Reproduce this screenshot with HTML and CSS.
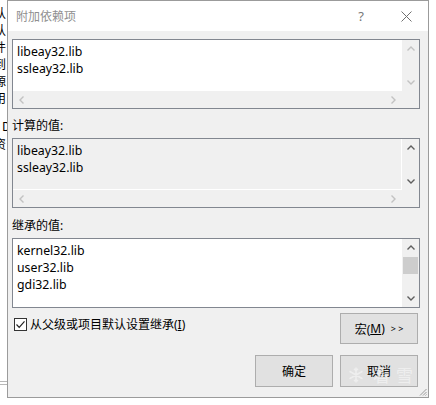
FILE: index.html
```html
<!DOCTYPE html>
<html lang="zh-CN">
<head>
    <meta charset="UTF-8">
    <meta name="viewport" content="width=device-width, initial-scale=1.0">
    <title>附加依赖项</title>
    <link rel="stylesheet" href="styles.css">
</head>
<body>
    <div class="screen">
        <div class="edge-left">
            <div class="edge-chars">
                <span>认</span>
                <span>认</span>
                <span>件</span>
                <span>到</span>
                <span>源</span>
                <span>用</span>
            </div>
            <div class="edge-chars lower">
                <span class="latin">D</span>
                <span>资</span>
            </div>
            <div class="edge-rule"></div>
            <div class="edge-rule close-rule"></div>
        </div>

        <div class="dialog">
            <div class="titlebar">
                <span class="title">附加依赖项</span>
                <span class="help">?</span>
                <span class="close">
                    <svg width="11" height="11" viewBox="0 0 11 11"><path d="M0.5 0.5 L10.5 10.5 M10.5 0.5 L0.5 10.5" stroke="#707070" stroke-width="1" fill="none"/></svg>
                </span>
            </div>

            <div class="content">
                <div class="listbox">
                    <div class="list-items">
                        <div>libeay32.lib</div>
                        <div>ssleay32.lib</div>
                    </div>
                    <div class="vscroll">
                        <span class="arrow"><svg width="8" height="5" viewBox="0 0 8 5"><path d="M0.5 4.5 L4 1 L7.5 4.5" fill="none" stroke="currentColor" stroke-width="1.4"/></svg></span>
                        <span class="arrow down"><svg width="8" height="5" viewBox="0 0 8 5"><path d="M0.5 0.5 L4 4 L7.5 0.5" fill="none" stroke="currentColor" stroke-width="1.4"/></svg></span>
                    </div>
                    <div class="hscroll">
                        <span class="arrow"><svg width="5" height="8" viewBox="0 0 5 8"><path d="M4.5 0.5 L1 4 L4.5 7.5" fill="none" stroke="currentColor" stroke-width="1.4"/></svg></span>
                        <span class="arrow"><svg width="5" height="8" viewBox="0 0 5 8"><path d="M0.5 0.5 L4 4 L0.5 7.5" fill="none" stroke="currentColor" stroke-width="1.4"/></svg></span>
                    </div>
                    <div class="corner"></div>
                </div>

                <div class="field-label">计算的值:</div>
                <div class="listbox readonly">
                    <div class="list-items">
                        <div>libeay32.lib</div>
                        <div>ssleay32.lib</div>
                    </div>
                    <div class="vscroll">
                        <span class="arrow on"><svg width="8" height="5" viewBox="0 0 8 5"><path d="M0.5 4.5 L4 1 L7.5 4.5" fill="none" stroke="currentColor" stroke-width="1.4"/></svg></span>
                        <span class="arrow on down"><svg width="8" height="5" viewBox="0 0 8 5"><path d="M0.5 0.5 L4 4 L7.5 0.5" fill="none" stroke="currentColor" stroke-width="1.4"/></svg></span>
                    </div>
                    <div class="hscroll">
                        <span class="arrow"><svg width="5" height="8" viewBox="0 0 5 8"><path d="M4.5 0.5 L1 4 L4.5 7.5" fill="none" stroke="currentColor" stroke-width="1.4"/></svg></span>
                        <span class="arrow"><svg width="5" height="8" viewBox="0 0 5 8"><path d="M0.5 0.5 L4 4 L0.5 7.5" fill="none" stroke="currentColor" stroke-width="1.4"/></svg></span>
                    </div>
                    <div class="corner"></div>
                </div>

                <div class="field-label spaced">继承的值:</div>
                <div class="listbox no-h">
                    <div class="list-items">
                        <div>kernel32.lib</div>
                        <div>user32.lib</div>
                        <div>gdi32.lib</div>
                    </div>
                    <div class="vscroll">
                        <span class="arrow on"><svg width="8" height="5" viewBox="0 0 8 5"><path d="M0.5 4.5 L4 1 L7.5 4.5" fill="none" stroke="currentColor" stroke-width="1.4"/></svg></span>
                        <span class="thumb"></span>
                        <span class="arrow on down"><svg width="8" height="5" viewBox="0 0 8 5"><path d="M0.5 0.5 L4 4 L7.5 0.5" fill="none" stroke="currentColor" stroke-width="1.4"/></svg></span>
                    </div>
                </div>

                <div class="options-row">
                    <label class="check">
                        <span class="box"><svg width="11" height="11" viewBox="0 0 11 11"><path d="M1.5 5.5 L4.2 8.3 L9.5 2.3" fill="none" stroke="#222" stroke-width="1.2"/></svg></span>
                        <span>从父级或项目默认设置继承(<u>I</u>)</span>
                    </label>
                    <button class="btn" type="button">宏(<u>M</u>)<span class="more">&gt; &gt;</span></button>
                </div>

                <div class="actions">
                    <button class="btn tall" type="button">确定</button>
                    <button class="btn tall" type="button">取消</button>
                </div>
            </div>

            <div class="watermark">
                <svg width="16" height="16" viewBox="0 0 16 16"><path d="M8 0.5 V15.5 M1.5 4.2 L14.5 11.8 M1.5 11.8 L14.5 4.2 M6 1.8 L8 3.5 L10 1.8 M6 14.2 L8 12.5 L10 14.2" fill="none" stroke="#fff" stroke-width="1.6"/></svg>
                <span>看雪</span>
            </div>
            <svg class="grip" width="8" height="8" viewBox="0 0 8 8"><path d="M7.5 1 L1 7.5 M7.5 4 L4 7.5 M7.5 6.5 L6.5 7.5" stroke="#9a9a9a" stroke-width="1" fill="none"/></svg>
        </div>

        <div class="edge-right"></div>
    </div>
</body>
</html>
```

FILE: styles.css
```css
* {
    box-sizing: border-box;
}
body {
    margin: 0;
    background: #fff;
    font-family: "Noto Sans", "Noto Sans CJK SC", sans-serif;
    font-size: 12px;
    color: #000;
}
.screen {
    display: flex;
    width: 436px;
    height: 405px;
    overflow: hidden;
}

/* what is left of the window behind the dialog */
.edge-left {
    width: 7px;
    flex: none;
    overflow: hidden;
    display: flex;
    flex-direction: column;
}
.edge-chars {
    margin-left: -6px;
    padding-top: 4px;
    font-family: "Noto Sans CJK SC", sans-serif;
    font-size: 12px;
    line-height: 17px;
    white-space: nowrap;
}
.edge-chars span {
    display: block;
    height: 17px;
}
.edge-chars.lower {
    padding-top: 11px;
}
.edge-chars.lower span {
    height: 18px;
    line-height: 18px;
}
.edge-chars .latin {
    padding-left: 8px;
}
.edge-rule {
    margin-top: 228px;
    border-top: 1px solid #b8b8b8;
}
.edge-rule.close-rule {
    margin-top: 2px;
}
.edge-right {
    flex: 1;
}

.dialog {
    position: relative;
    width: 422px;
    height: 398px;
    flex: none;
    border: 1px solid #9b9b9b;
    background: #f0f0f0;
}
.titlebar {
    height: 30px;
    display: flex;
    align-items: center;
    padding-left: 8px;
    padding-right: 7px;
    background: #fff;
}
.title {
    color: #8f8f8f;
}
.help {
    margin-left: auto;
    width: 20px;
    text-align: center;
    color: #777;
    font-size: 13px;
}
.close {
    width: 30px;
    margin-left: 20px;
    display: flex;
    justify-content: center;
}

.content {
    padding: 8px 8px 0 4px;
}
.listbox {
    height: 70px;
    border: 1px solid #828790;
    background: #fff;
    display: grid;
    grid-template-columns: 1fr 17px;
    grid-template-rows: 1fr 17px;
}
.listbox.no-h {
    grid-template-rows: 1fr;
}
.listbox.readonly {
    background: #f0f0f0;
}
.listbox.readonly .list-items {
    border-right: 1px solid #fff;
    border-bottom: 1px solid #fff;
}
.list-items {
    padding: 3px 4px;
    font-size: 12.3px;
    line-height: 17px;
    overflow: hidden;
}
.vscroll {
    display: flex;
    flex-direction: column;
    background: #f0f0f0;
}
.hscroll {
    display: flex;
    justify-content: space-between;
    background: #f0f0f0;
}
.corner {
    background: #f0f0f0;
}
.arrow {
    width: 17px;
    height: 17px;
    display: flex;
    align-items: center;
    justify-content: center;
    color: #c2c2c2;
}
.arrow.on {
    color: #5f5f5f;
}
.arrow.down {
    margin-top: auto;
}
.thumb {
    height: 17px;
    margin: 1px 1px 0;
    background: #cdcdcd;
}

.field-label {
    margin: 8px 0 4px;
    line-height: 17px;
}
.field-label.spaced {
    margin-top: 9px;
}

.options-row {
    display: flex;
    justify-content: space-between;
    align-items: flex-start;
    margin-top: 5px;
    padding-right: 2px;
}
.check {
    display: flex;
    align-items: center;
    gap: 3px;
    margin-top: 3px;
    padding-left: 2px;
    line-height: 17px;
}
.box {
    width: 13px;
    height: 13px;
    border: 1px solid #333;
    background: #fff;
    display: flex;
    align-items: center;
    justify-content: center;
}
.btn {
    width: 78px;
    height: 31px;
    padding: 0;
    border: 1px solid #adadad;
    background: #e1e1e1;
    font: inherit;
    color: #000;
    display: flex;
    align-items: center;
    justify-content: center;
}
.btn.tall {
    height: 32px;
}
.btn .more {
    margin-left: 6px;
    font-size: 9px;
}
.actions {
    display: flex;
    justify-content: flex-end;
    gap: 7px;
    margin-top: 11px;
    padding-right: 2px;
}

/* overlays */
.watermark {
    position: absolute;
    left: 340px;
    top: 361px;
    display: flex;
    align-items: center;
    gap: 9px;
    opacity: 0.45;
    pointer-events: none;
}
.watermark span {
    color: #fff;
    font-family: "Noto Sans CJK SC", sans-serif;
    font-size: 17px;
    letter-spacing: 6px;
}
.grip {
    position: absolute;
    right: 1px;
    bottom: 1px;
}
```
